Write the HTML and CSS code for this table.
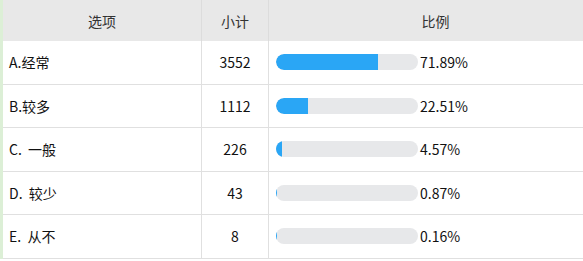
FILE: index.html
```html
<!DOCTYPE html>
<html lang="zh">
<head>
<meta charset="utf-8">
<link rel="stylesheet" href="styles.css">
</head>
<body>
<div class="frame">
  <table class="stats">
    <thead>
      <tr>
        <th class="c-opt">选项</th>
        <th class="c-num">小计</th>
        <th class="c-pct">比例</th>
      </tr>
    </thead>
    <tbody>
      <tr>
        <td class="c-opt">A.经常</td>
        <td class="c-num">3552</td>
        <td class="c-pct"><div class="pct"><div class="bar"><div class="fill" style="width:71.89%"></div></div><span class="val">71.89%</span></div></td>
      </tr>
      <tr>
        <td class="c-opt">B.较多</td>
        <td class="c-num">1112</td>
        <td class="c-pct"><div class="pct"><div class="bar"><div class="fill" style="width:22.51%"></div></div><span class="val">22.51%</span></div></td>
      </tr>
      <tr>
        <td class="c-opt">C.&nbsp; 一般</td>
        <td class="c-num">226</td>
        <td class="c-pct"><div class="pct"><div class="bar"><div class="fill" style="width:4.57%"></div></div><span class="val">4.57%</span></div></td>
      </tr>
      <tr>
        <td class="c-opt">D.&nbsp; 较少</td>
        <td class="c-num">43</td>
        <td class="c-pct"><div class="pct"><div class="bar"><div class="fill" style="width:0.87%"></div></div><span class="val">0.87%</span></div></td>
      </tr>
      <tr>
        <td class="c-opt">E.&nbsp; 从不</td>
        <td class="c-num">8</td>
        <td class="c-pct"><div class="pct"><div class="bar"><div class="fill" style="width:0.16%"></div></div><span class="val">0.16%</span></div></td>
      </tr>
    </tbody>
  </table>
</div>
</body>
</html>
```

FILE: styles.css
```css
html, body {
  margin: 0;
  padding: 0;
  background: #ffffff;
}
body {
  font-family: "Noto Sans CJK SC", "Noto Sans", sans-serif;
  font-size: 14px;
  color: #111;
}
.frame {
  border-left: 3px solid #dcefd6;
  width: 600px;
}
.stats {
  border-collapse: collapse;
  table-layout: fixed;
  width: 600px;
}
.stats th {
  background: #e8e8e8;
  height: 41px;
  font-weight: normal;
  color: #333;
  padding: 0;
  border-right: 1px solid #dcdcdc;
  text-align: center;
}
.stats td {
  height: 42.5px;
  padding: 0;
  border-bottom: 1px solid #e0e0e0;
  border-right: 1px solid #e0e0e0;
}
.c-opt { width: 198px; }
.stats td.c-opt { padding-left: 6px; }
.c-num { width: 66px; text-align: center; }
.stats td.c-num { text-align: center; }
.pct {
  display: flex;
  align-items: center;
  padding-left: 7px;
}
.bar {
  width: 142px;
  height: 16px;
  border-radius: 8px;
  background: #e7e8ea;
  overflow: hidden;
}
.fill {
  height: 100%;
  background: #2aa6f5;
  border-radius: 8px 0 0 8px;
}
.val {
  margin-left: 2px;
}
```
